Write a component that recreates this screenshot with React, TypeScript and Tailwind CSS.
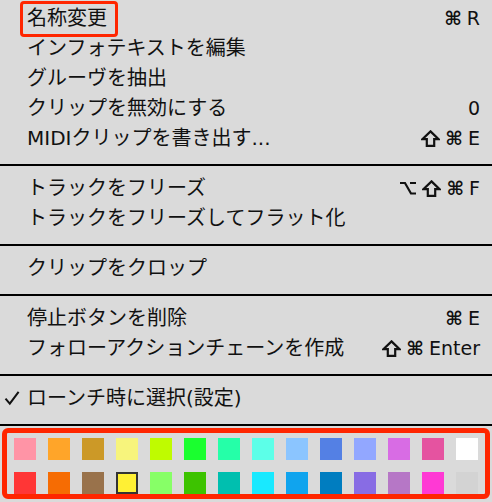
import React from "react";

type Item = { label: string; keys?: string[]; checked?: boolean };

const sections: Item[][] = [
  [
    { label: "名称変更", keys: ["⌘", "R"] },
    { label: "インフォテキストを編集" },
    { label: "グルーヴを抽出" },
    { label: "クリップを無効にする", keys: ["0"] },
    { label: "MIDIクリップを書き出す...", keys: ["⇧", "⌘", "E"] },
  ],
  [
    { label: "トラックをフリーズ", keys: ["⌥", "⇧", "⌘", "F"] },
    { label: "トラックをフリーズしてフラット化" },
  ],
  [{ label: "クリップをクロップ" }],
  [
    { label: "停止ボタンを削除", keys: ["⌘", "E"] },
    { label: "フォローアクションチェーンを作成", keys: ["⇧", "⌘", "Enter"] },
  ],
  [{ label: "ローンチ時に選択(設定)", checked: true }],
];

const topColors = [
  "#FF94A6", "#FFA529", "#CC9927", "#F7F47C", "#BFFB00", "#1AFF2F", "#25FFA8",
  "#5CFFE8", "#8BC5FF", "#5480E4", "#92A7FF", "#D86CE4", "#E553A0", "#FFFFFF",
];
const bottomColors = [
  "#FF3636", "#F66C03", "#99724B", "#FFF034", "#87FF67", "#3DC300", "#00BFAF",
  "#19E9FF", "#10A4EE", "#007DC0", "#886CE4", "#B677C6", "#FF39D4", "#D3D3D3",
];

// Outlined shift-key arrow
function ShiftGlyph() {
  return (
    <svg width="19" height="17" viewBox="0 0 19 17" className="block">
      <path
        d="M9.5 1.4 L17.6 9.2 L13.2 9.2 L13.2 15.8 L5.8 15.8 L5.8 9.2 L1.4 9.2 Z"
        fill="none"
        stroke="#111111"
        strokeWidth="2.2"
        strokeLinejoin="miter"
      />
    </svg>
  );
}

// Option-key glyph
function OptionGlyph() {
  return (
    <svg width="18" height="14" viewBox="0 0 18 14" className="block">
      <path d="M1 2 L6 2 L12 12.5 L17 12.5 M11 2 L17 2" fill="none" stroke="#111111" strokeWidth="2.2" />
    </svg>
  );
}

function CheckGlyph() {
  return (
    <svg width="16" height="16" viewBox="0 0 16 16" className="block">
      <path d="M1.5 8.6 L5.8 13.6 L14.6 1.8" fill="none" stroke="#111111" strokeWidth="2" />
    </svg>
  );
}

function Key({ k }: { k: string }) {
  if (k === "⇧") return <ShiftGlyph />;
  if (k === "⌥") return <OptionGlyph />;
  if (k === "⌘") return <span className="font-bold">⌘</span>;
  return <span>{k}</span>;
}

function Row({ item, highlight }: { item: Item; highlight?: boolean }) {
  return (
    <div className="flex h-[30px] items-center justify-between pr-[12px]">
      <div className="flex items-center">
        <span className="flex w-[27px] pl-[4px]">{item.checked && <CheckGlyph />}</span>
        <span className="relative inline-block whitespace-nowrap leading-[30px]">
          {item.label}
          {highlight && (
            <span className="pointer-events-none absolute left-[-7px] right-[-11px] top-[-2px] bottom-[-4px] rounded-[4px] border-[3.5px] border-[#ff2600]" />
          )}
        </span>
      </div>
      {item.keys && (
        <div className="flex items-center gap-[5px] whitespace-nowrap text-[19px]">
          {item.keys.map((k, i) => (
            <Key key={i} k={k} />
          ))}
        </div>
      )}
    </div>
  );
}

function Separator() {
  return <div className="mt-[11px] mb-[7px] h-[2px] bg-black" />;
}

export default function App() {
  return (
    <div
      className="relative h-[502px] w-[492px] overflow-hidden bg-[#dadada] pt-[3px] text-[20px] leading-[30px] text-[#111111]"
      style={{ fontFamily: '"DejaVu Sans", "Noto Sans CJK JP", sans-serif' }}
    >
      {sections.map((sec, si) => (
        <React.Fragment key={si}>
          {si > 0 && <Separator />}
          {sec.map((item, ii) => (
            <Row key={ii} item={item} highlight={si === 0 && ii === 0} />
          ))}
        </React.Fragment>
      ))}
      <div className="mt-[11px] h-[2px] bg-black" />
      <div className="relative pl-[14px] pt-[12px]">
        <div className="grid grid-cols-[repeat(14,22px)] gap-x-[12px] gap-y-[12px]">
          {topColors.map((c, i) => (
            <div key={`t${i}`} className="h-[22px] w-[22px]" style={{ backgroundColor: c }} />
          ))}
          {bottomColors.map((c, i) => (
            <div
              key={`b${i}`}
              className={i === 3 ? "h-[22px] w-[22px] border-2 border-[#333333]" : "h-[22px] w-[22px]"}
              style={{ backgroundColor: c }}
            />
          ))}
        </div>
        <div className="pointer-events-none absolute left-[2px] top-[2px] h-[71px] w-[488px] rounded-[6px] border-[5px] border-[#ff2600]" />
      </div>
    </div>
  );
}
